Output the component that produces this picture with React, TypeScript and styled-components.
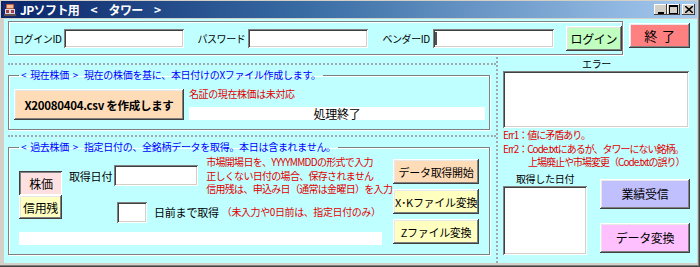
import React from "react";
import styled, { createGlobalStyle, css } from "styled-components";

const GlobalStyle = createGlobalStyle`
  html, body {
    margin: 0;
    padding: 0;
    background: #d4d0c8;
  }
  body {
    font-family: "Noto Sans CJK JP", "Noto Sans", sans-serif;
    color: #000;
  }
`;

const raised = css`
  box-shadow: inset -1px -1px 0 #404040, inset 1px 1px 0 #ffffff,
    inset -2px -2px 0 #808080, inset 2px 2px 0 #e8e8e8;
`;

const sunken = css`
  box-shadow: inset 1px 1px 0 #808080, inset -1px -1px 0 #ffffff,
    inset 2px 2px 0 #404040, inset -2px -2px 0 #d4d0c8;
`;

function App() {
  return (
    <>
      <GlobalStyle />
      <Window>
        <TitleBar>
          <TitleIcon />
          <TitleText>JPソフト用　&lt;　タワー　&gt;</TitleText>
          <CaptionButtons>
            <CaptionButton>
              <svg width="8" height="8" viewBox="0 0 8 8">
                <rect x="1" y="6" width="6" height="2" fill="#000" />
              </svg>
            </CaptionButton>
            <CaptionButton>
              <svg width="9" height="9" viewBox="0 0 9 9">
                <rect x="0.5" y="0.5" width="8" height="8" fill="none" stroke="#000" />
                <rect x="0" y="0" width="9" height="2" fill="#000" />
              </svg>
            </CaptionButton>
            <CaptionButton $gap>
              <svg width="8" height="7" viewBox="0 0 8 7">
                <path d="M0 0L8 7M8 0L0 7" stroke="#000" strokeWidth="1.6" />
              </svg>
            </CaptionButton>
          </CaptionButtons>
        </TitleBar>

        <Client>
          <TopRow>
            <LoginFrame>
              <FieldLabel>ログインID</FieldLabel>
              <TextBox $w={120} $h={19} />
              <FieldLabel $ml={13}>パスワード</FieldLabel>
              <TextBox $w={120} $h={19} />
              <FieldLabel $ml={14}>ベンダーID</FieldLabel>
              <TextBox $w={121} $h={19}>
                <Caret />
              </TextBox>
              <WinButton $bg="#c0ffc0" $w={56} $h={25} $size={12} $ml={12}>
                ログイン
              </WinButton>
            </LoginFrame>
            <ExitButton $bg="#ff8080" $w={61} $h={25} $size={13}>
              終&nbsp;&nbsp;了
            </ExitButton>
          </TopRow>

          <Main>
            <LeftColumn>
              <Section>
                <Group>
                  <Legend>
                    &lt;&nbsp;&nbsp;現在株価&nbsp;&nbsp;&gt;&nbsp;&nbsp;&nbsp;現在の株価を基に、本日付けのXファイル作成します。
                  </Legend>
                  <CurrentRow>
                    <WinButton $bg="#ffdcb8" $w={170} $h={31} $size={11.5} $bold>
                      X20080404.csv を作成します
                    </WinButton>
                    <StatusColumn>
                      <Notice>名証の現在株価は未対応</Notice>
                      <StatusBar>処理終了</StatusBar>
                    </StatusColumn>
                  </CurrentRow>
                </Group>
              </Section>

              <Section $grow>
                <Group $tall>
                  <Legend>
                    &lt;&nbsp;&nbsp;過去株価&nbsp;&nbsp;&gt;&nbsp;&nbsp;&nbsp;指定日付の、全銘柄データを取得。本日は含まれません。
                  </Legend>
                  <PastRow>
                    <PastMain>
                      <PastUpper>
                        <ToggleColumn>
                          <WinButton $bg="#ffe0e0" $w={43} $h={24} $size={12} $pressed>
                            株価
                          </WinButton>
                          <WinButton $bg="#ffffc0" $w={43} $h={24} $size={12}>
                            信用残
                          </WinButton>
                        </ToggleColumn>
                        <PastForm>
                          <DateRow>
                            <FormLabel $mt={15}>取得日付</FormLabel>
                            <TextBox $w={84} $h={21} $mt={10} $ml={2} />
                            <Notice $ml={8} $lines>
                              市場開場日を、YYYYMMDDの形式で入力
                              <br />
                              正しくない日付の場合、保存されません
                              <br />
                              信用残は、申込み日（通常は金曜日）を入力
                            </Notice>
                          </DateRow>
                          <DaysRow>
                            <TextBox $w={30} $h={21} $ml={48} />
                            <FormLabel $ml={7}>日前まで取得</FormLabel>
                            <Notice $ml={3}>（未入力や0日前は、指定日付のみ）</Notice>
                          </DaysRow>
                        </PastForm>
                      </PastUpper>
                      <ProgressBar />
                    </PastMain>
                    <ActionColumn>
                      <WinButton $bg="#ffdcb8" $w={86} $h={25} $size={11}>
                        データ取得開始
                      </WinButton>
                      <WinButton $bg="#ffffc0" $w={86} $h={25} $size={11}>
                        X･Kファイル変換
                      </WinButton>
                      <WinButton $bg="#ffffc0" $w={86} $h={25} $size={11}>
                        Zファイル変換
                      </WinButton>
                    </ActionColumn>
                  </PastRow>
                </Group>
              </Section>
            </LeftColumn>

            <RightColumn>
              <BoxCaption>エラー</BoxCaption>
              <TextBox $w={186} $h={57} />
              <ErrorText>
                Err1：値に矛盾あり。
                <br />
                Err2：Code.txtにあるが、タワーにない銘柄。
                <br />
                <Indent>上場廃止や市場変更（Code.txtの誤り）</Indent>
              </ErrorText>
              <BottomRow>
                <DateListColumn>
                  <BoxCaption>取得した日付</BoxCaption>
                  <TextBox $w={84} $h={69} />
                </DateListColumn>
                <SideButtons>
                  <WinButton $bg="#c0c0ff" $w={90} $h={30} $size={12}>
                    業績受信
                  </WinButton>
                  <WinButton $bg="#ffc0ff" $w={90} $h={30} $size={12}>
                    データ変換
                  </WinButton>
                </SideButtons>
              </BottomRow>
            </RightColumn>
          </Main>
        </Client>
      </Window>
    </>
  );
}

function TitleIcon() {
  return (
    <IconSvg width="14" height="14" viewBox="0 0 14 14">
      <rect x="3" y="1" width="8" height="5" rx="1" fill="#c06040" />
      <rect x="4" y="2" width="6" height="3" fill="#f0c0a0" />
      <rect x="2" y="6" width="10" height="5" fill="#d8d8e8" />
      <rect x="3" y="7" width="3" height="3" fill="#a04040" />
      <rect x="8" y="7" width="3" height="3" fill="#a04040" />
      <rect x="1" y="11" width="12" height="2" fill="#605050" />
    </IconSvg>
  );
}

export default App;

const Window = styled.div`
  width: 700px;
  height: 267px;
  box-sizing: border-box;
  padding: 1px 3px 4px 1px;
  display: flex;
  flex-direction: column;
  background: #d4d0c8;
  box-shadow: inset -1px -1px 0 #404040, inset -2px -2px 0 #808080;
`;

const TitleBar = styled.div`
  height: 17px;
  display: flex;
  align-items: center;
  padding: 0 2px;
  background: linear-gradient(to right, #0a246a 0%, #3a6ea5 45%, #a6caf0 100%);
`;

const IconSvg = styled.svg`
  flex: none;
  background: #1a2a6a;
`;

const TitleText = styled.div`
  margin-left: 3px;
  color: #fff;
  font-size: 12px;
  font-weight: bold;
  letter-spacing: -0.6px;
  line-height: 17px;
  white-space: pre;
`;

const CaptionButtons = styled.div`
  margin-left: auto;
  display: flex;
  align-items: center;
`;

const CaptionButton = styled.div<{ $gap?: boolean }>`
  width: 13px;
  height: 11px;
  margin-left: ${(p) => (p.$gap ? "2px" : "0")};
  background: #d4d0c8;
  display: flex;
  align-items: center;
  justify-content: center;
  box-shadow: inset -1px -1px 0 #404040, inset 1px 1px 0 #ffffff;
`;

const Client = styled.div`
  flex: 1;
  margin: 1px 0 0 3px;
  padding: 2px 7px 0 4px;
  background: #c0ffff;
  display: flex;
  flex-direction: column;
  min-height: 0;
`;

const TopRow = styled.div`
  display: flex;
  align-items: flex-start;
`;

const LoginFrame = styled.div`
  width: 615px;
  height: 34px;
  box-sizing: border-box;
  display: flex;
  align-items: center;
  padding: 0 0 0 5px;
  border: 1px solid #808080;
  box-shadow: inset 1px 1px 0 #ffffff, 1px 1px 0 #ffffff;
`;

const FieldLabel = styled.span<{ $ml?: number }>`
  margin-left: ${(p) => p.$ml ?? 0}px;
  margin-right: 3px;
  font-size: 10px;
  letter-spacing: -0.4px;
  white-space: nowrap;
`;

const TextBox = styled.div<{ $w: number; $h: number; $mt?: number; $ml?: number }>`
  position: relative;
  flex: none;
  width: ${(p) => p.$w}px;
  height: ${(p) => p.$h}px;
  margin-top: ${(p) => p.$mt ?? 0}px;
  margin-left: ${(p) => p.$ml ?? 0}px;
  box-sizing: border-box;
  background: #fff;
  ${sunken}
`;

const Caret = styled.span`
  position: absolute;
  left: 2px;
  top: 3px;
  width: 2px;
  height: 13px;
  background: #505050;
`;

const WinButton = styled.div<{
  $bg: string;
  $w: number;
  $h: number;
  $size: number;
  $bold?: boolean;
  $pressed?: boolean;
  $ml?: number;
}>`
  flex: none;
  width: ${(p) => p.$w}px;
  height: ${(p) => p.$h}px;
  margin-left: ${(p) => p.$ml ?? 0}px;
  box-sizing: border-box;
  display: flex;
  align-items: center;
  justify-content: center;
  background: ${(p) => p.$bg};
  font-size: ${(p) => p.$size}px;
  font-weight: ${(p) => (p.$bold ? "bold" : "normal")};
  letter-spacing: -0.3px;
  white-space: nowrap;
  ${(p) =>
    p.$pressed
      ? css`
          box-shadow: inset 1px 1px 0 #404040, inset -1px -1px 0 #ffffff,
            inset 2px 2px 0 #808080;
          padding: 1px 0 0 1px;
        `
      : raised}
`;

const ExitButton = styled(WinButton)`
  margin: 2px 0 0 6px;
`;

const Main = styled.div`
  flex: 1;
  display: flex;
  margin-top: 2px;
  min-height: 0;
`;

const LeftColumn = styled.div`
  width: 490px;
  flex: none;
  box-sizing: border-box;
  padding-top: 6px;
  border-right: 2px dotted #a0a8b0;
  display: flex;
  flex-direction: column;
`;

const Section = styled.div<{ $grow?: boolean }>`
  border-top: 2px dotted #a0a8b0;
  padding-top: 3px;
  height: ${(p) => (p.$grow ? "auto" : "72px")};
  flex: ${(p) => (p.$grow ? 1 : "none")};
  box-sizing: border-box;
`;

const Group = styled.fieldset<{ $tall?: boolean }>`
  width: 482px;
  margin: 0;
  box-sizing: border-box;
  padding: 7px 5px ${(p) => (p.$tall ? "0" : "9px")} 5px;
  border: 1px solid #808080;
  box-shadow: inset 1px 1px 0 #ffffff, 1px 1px 0 #ffffff;
  min-width: 0;
  ${(p) => p.$tall && "height: 115px; padding-top: 1px;"}
`;

const Legend = styled.legend`
  margin-left: 5px;
  padding: 0 2px;
  font-size: 10px;
  line-height: 14px;
  letter-spacing: -0.3px;
  color: #0000ff;
  white-space: nowrap;
`;

const CurrentRow = styled.div`
  display: flex;
  align-items: flex-start;
`;

const StatusColumn = styled.div`
  margin-left: 5px;
  flex: 1;
  display: flex;
  flex-direction: column;
`;

const Notice = styled.div<{ $ml?: number; $lines?: boolean }>`
  margin-left: ${(p) => p.$ml ?? 0}px;
  color: #e00000;
  font-size: 10px;
  letter-spacing: ${(p) => (p.$lines ? "-0.7px" : "-0.4px")};
  line-height: ${(p) => (p.$lines ? "13.5px" : "12px")};
  white-space: nowrap;
  margin-top: ${(p) => (p.$lines ? "0" : "-1px")};
`;

const StatusBar = styled.div`
  margin-top: 7px;
  height: 13px;
  width: 296px;
  background: #fff;
  font-size: 12px;
  line-height: 13px;
  text-align: center;
  letter-spacing: -0.3px;
`;

const PastRow = styled.div`
  display: flex;
  align-items: flex-start;
  padding-left: 5px;
`;

const PastMain = styled.div`
  width: 363px;
  display: flex;
  flex-direction: column;
`;

const PastUpper = styled.div`
  display: flex;
  align-items: flex-start;
`;

const ToggleColumn = styled.div`
  margin-top: 16px;
  display: flex;
  flex-direction: column;
`;

const PastForm = styled.div`
  margin-left: 7px;
  display: flex;
  flex-direction: column;
`;

const DateRow = styled.div`
  display: flex;
  align-items: flex-start;
`;

const DaysRow = styled.div`
  display: flex;
  align-items: center;
  margin-top: 6px;
`;

const FormLabel = styled.span<{ $ml?: number; $mt?: number }>`
  margin-left: ${(p) => p.$ml ?? 0}px;
  margin-top: ${(p) => p.$mt ?? 0}px;
  font-size: 11px;
  line-height: 13px;
  letter-spacing: -0.2px;
  white-space: nowrap;
`;

const ProgressBar = styled.div`
  margin-top: 9px;
  height: 13px;
  background: #fff;
`;

const ActionColumn = styled.div`
  margin: 4px 0 0 11px;
  display: flex;
  flex-direction: column;
  gap: 5px;
`;

const RightColumn = styled.div`
  flex: 1;
  padding-left: 5px;
  display: flex;
  flex-direction: column;
  align-items: flex-start;
`;

const BoxCaption = styled.div`
  align-self: stretch;
  text-align: center;
  font-size: 10px;
  line-height: 14px;
  letter-spacing: -0.3px;
`;

const ErrorText = styled.div`
  color: #e00000;
  font-size: 10px;
  line-height: 13.5px;
  letter-spacing: -1px;
  white-space: nowrap;
`;

const Indent = styled.span`
  padding-left: 25px;
`;

const BottomRow = styled.div`
  display: flex;
  align-items: flex-start;
  margin-top: 3px;
`;

const DateListColumn = styled.div`
  display: flex;
  flex-direction: column;
  width: 84px;
`;

const SideButtons = styled.div`
  margin: 7px 0 0 13px;
  display: flex;
  flex-direction: column;
  gap: 14px;
`;
